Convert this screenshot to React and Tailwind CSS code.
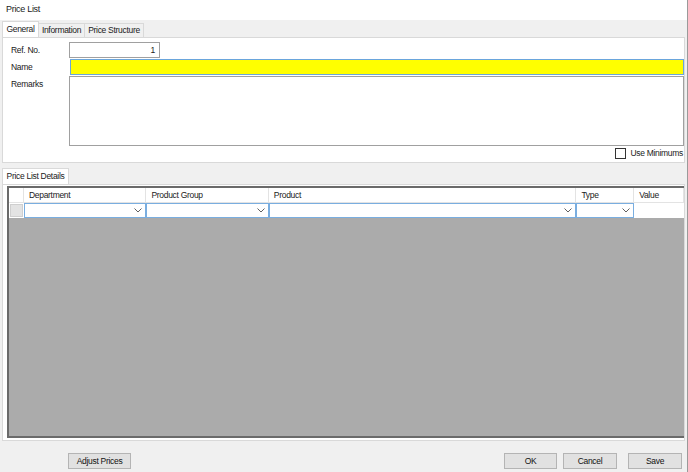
import React from "react";

const Chevron = () => (
  <svg width="8" height="5" viewBox="0 0 8 5" className="shrink-0">
    <path d="M0.5 0.5 L4 4 L7.5 0.5" fill="none" stroke="#606060" strokeWidth="1" />
  </svg>
);

function Combo({ width }) {
  return (
    <div
      className="h-[15px] border border-[#7aaee0] bg-white flex items-center justify-end pr-[3px]"
      style={{ width }}
    >
      <Chevron />
    </div>
  );
}

function Btn({ children, className = "" }) {
  return (
    <div
      className={
        "h-[16px] border border-[#b4b4b4] bg-[#e1e1e1] flex items-center justify-center whitespace-nowrap text-[#111] " +
        className
      }
    >
      {children}
    </div>
  );
}

export default function App() {
  const cols = [
    { name: "Department", w: 123 },
    { name: "Product Group", w: 123 },
    { name: "Product", w: 309 },
    { name: "Type", w: 58 },
    { name: "Value", w: 50 },
  ];

  return (
    <div
      className="w-[688px] h-[472px] bg-[#f0f0f0] border-r border-[#9a9a9a] flex flex-col text-[8.5px] tracking-[-0.3px] text-[#1a1a1a] whitespace-nowrap overflow-hidden"
      style={{ fontFamily: '"Liberation Sans", Arial, sans-serif' }}
    >
      {/* title */}
      <div className="h-[20px] bg-white pl-[6px] flex items-center text-[9px]">Price List</div>

      {/* top tabs */}
      <div className="px-[2px] pt-[2px]">
        <div className="flex items-end h-[15px] relative z-10">
          <div className="h-[16px] w-[37px] bg-white border border-b-0 border-[#d9d9d9] flex items-center justify-center">
            General
          </div>
          <div className="h-[14px] w-[46px] bg-[#f0f0f0] border border-l-0 border-b-0 border-[#d9d9d9] flex items-center justify-center">
            Information
          </div>
          <div className="h-[14px] w-[59px] bg-[#f0f0f0] border border-l-0 border-b-0 border-[#d9d9d9] flex items-center justify-center">
            Price Structure
          </div>
        </div>
        <div className="h-[126px] w-[683px] bg-white border border-[#d9d9d9] pt-[4px] flex flex-col gap-[1px]">
          <div className="flex items-center h-[16px]">
            <div className="w-[66px] pl-[8px]">Ref. No.</div>
            <div className="w-[91px] h-[16px] border border-[#a0a0a0] bg-white flex items-center justify-end pr-[4px]">
              1
            </div>
          </div>
          <div className="flex items-center h-[16px]">
            <div className="w-[67px] pl-[8px]">Name</div>
            <div className="w-[614px] h-[16px] border border-[#6aa5dc] bg-[#ffff00]" />
          </div>
          <div className="flex items-start h-[70px]">
            <div className="w-[66px] pl-[8px] pt-[2px]">Remarks</div>
            <div className="w-[616px] h-[70px] border border-[#a0a0a0] bg-white" />
          </div>
          <div className="flex items-center justify-end h-[12px] pr-[1px]">
            <div className="w-[11px] h-[11px] border border-[#333] bg-white mr-[4px]" />
            <span>Use Minimums</span>
          </div>
        </div>
      </div>

      {/* details tabs */}
      <div className="px-[2px] pt-[6px]">
        <div className="flex items-end h-[15px] relative z-10">
          <div className="h-[16px] w-[67px] bg-white border border-b-0 border-[#d9d9d9] flex items-center justify-center">
            Price List Details
          </div>
        </div>
        <div className="h-[257px] w-[683px] bg-white border border-[#d9d9d9] pl-[4px] pt-[1px] pb-[2px]">
          <div className="h-full border-t-2 border-l-2 border-b-2 border-[#6a6a6a] bg-[#ababab] flex flex-col">
            <div className="flex h-[14px] bg-white">
              <div className="w-[15px] border-r border-[#e3e3e3]" />
              {cols.map((c) => (
                <div
                  key={c.name}
                  className="border-r border-[#e3e3e3] pl-[5px] flex items-center"
                  style={{ width: c.w }}
                >
                  {c.name}
                </div>
              ))}
            </div>
            <div className="flex h-[16px] bg-white items-center border-t border-[#e3e3e3]">
              <div className="w-[15px] h-[16px] flex items-center justify-center">
                <div className="w-[13px] h-[13px] bg-[#e3e3e3] border border-[#cfcfcf]" />
              </div>
              <Combo width={123} />
              <Combo width={123} />
              <Combo width={309} />
              <Combo width={58} />
              <div className="w-[50px]" />
            </div>
          </div>
        </div>
      </div>

      {/* buttons */}
      <div className="flex items-center pt-[12px] pl-[68px] pr-[5px]">
        <Btn className="w-[63px]">Adjust Prices</Btn>
        <div className="flex-1" />
        <Btn className="w-[53px]">OK</Btn>
        <Btn className="w-[54px] ml-[6px]">Cancel</Btn>
        <Btn className="w-[54px] ml-[11px]">Save</Btn>
      </div>
    </div>
  );
}
